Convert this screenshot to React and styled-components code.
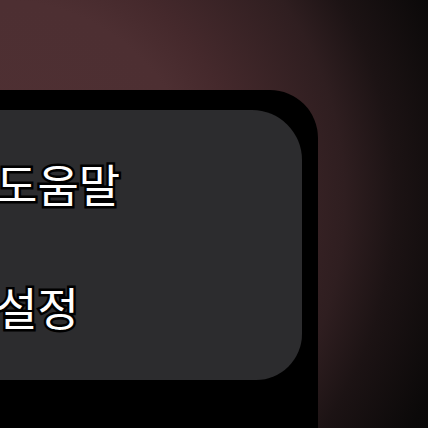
import React from "react";
import styled, { createGlobalStyle } from "styled-components";

const Global = createGlobalStyle`
  html, body {
    margin: 0;
    padding: 0;
    width: 428px;
    height: 428px;
    overflow: hidden;
  }
  body {
    background: radial-gradient(circle at 0px 200px, #4f3033 0px, #4d2f32 200px, #45292c 245px, #2f1e20 345px, #1c1314 395px, #0b0909 470px, #070707 520px);
    font-family: "Noto Sans CJK KR", "Noto Sans", sans-serif;
  }
`;

const Screen = styled.div`
  width: 428px;
  height: 428px;
  display: flex;
  flex-direction: column;
  padding-top: 90px;
  box-sizing: border-box;
`;

const Panel = styled.div`
  margin-left: -60px;
  width: 378px;
  flex: 1;
  background: #000;
  border-top-right-radius: 48px;
  padding: 20px 16px 0 0;
  box-sizing: border-box;
`;

const Card = styled.div`
  height: 270px;
  background: #2c2c2e;
  border-radius: 0 50px 46px 0;
  display: flex;
  flex-direction: column;
`;

const Row = styled.div`
  flex: 1;
  display: flex;
  align-items: center;
  padding-left: ${(p) => p.$indent}px;
`;

const Label = styled.span`
  color: #fff;
  font-size: 45px;
  font-weight: 400;
  line-height: 1;
  -webkit-text-stroke: 5px #000;
  paint-order: stroke fill;
  letter-spacing: 0;
  transform: translateY(${(p) => p.$dy}px);
`;

export default function App() {
  return (
    <>
      <Global />
      <Screen>
        <Panel>
          <Card>
            <Row $indent={56}>
              <Label $dy={6}>도움말</Label>
            </Row>
            <Row $indent={56}>
              <Label $dy={-6}>설정</Label>
            </Row>
          </Card>
        </Panel>
      </Screen>
    </>
  );
}
